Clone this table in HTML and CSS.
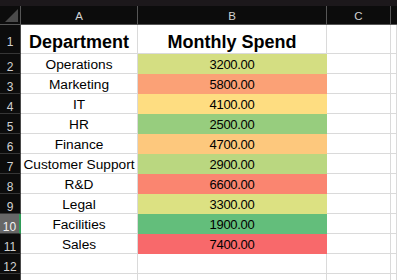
FILE: index.html
```html
<!DOCTYPE html>
<html>
<head>
<meta charset="utf-8">
<link rel="stylesheet" href="styles.css">
</head>
<body>
<div class="sheet">
  <div class="topband"></div>
  <div class="grid">
    <div class="hc corner"><svg width="20" height="18" viewBox="0 0 20 18"><polygon points="5,16 18,16 18,3" fill="#4a4a4a"/></svg></div>
    <div class="hc">A</div>
    <div class="hc">B</div>
    <div class="hc">C</div>
    <div class="hc last"></div>

    <div class="rh tall">1</div>
    <div class="c title">Department</div>
    <div class="c title">Monthly Spend</div>
    <div class="c"></div>
    <div class="c"></div>

    <div class="rh">2</div>
    <div class="c txt">Operations</div>
    <div class="c num" style="--f:#d4de82">3200.00</div>
    <div class="c"></div>
    <div class="c"></div>

    <div class="rh">3</div>
    <div class="c txt">Marketing</div>
    <div class="c num" style="--f:#fba176">5800.00</div>
    <div class="c"></div>
    <div class="c"></div>

    <div class="rh">4</div>
    <div class="c txt">IT</div>
    <div class="c num" style="--f:#fedd81">4100.00</div>
    <div class="c"></div>
    <div class="c"></div>

    <div class="rh">5</div>
    <div class="c txt">HR</div>
    <div class="c num" style="--f:#97cd7e">2500.00</div>
    <div class="c"></div>
    <div class="c"></div>

    <div class="rh">6</div>
    <div class="c txt">Finance</div>
    <div class="c num" style="--f:#fdc87d">4700.00</div>
    <div class="c"></div>
    <div class="c"></div>

    <div class="rh">7</div>
    <div class="c txt">Customer Support</div>
    <div class="c num" style="--f:#bad780">2900.00</div>
    <div class="c"></div>
    <div class="c"></div>

    <div class="rh">8</div>
    <div class="c txt">R&amp;D</div>
    <div class="c num" style="--f:#fa8570">6600.00</div>
    <div class="c"></div>
    <div class="c"></div>

    <div class="rh">9</div>
    <div class="c txt">Legal</div>
    <div class="c num" style="--f:#dce182">3300.00</div>
    <div class="c"></div>
    <div class="c"></div>

    <div class="rh sel">10</div>
    <div class="c txt">Facilities</div>
    <div class="c num" style="--f:#63be7b">1900.00</div>
    <div class="c"></div>
    <div class="c"></div>

    <div class="rh">11</div>
    <div class="c txt">Sales</div>
    <div class="c num" style="--f:#f8696b">7400.00</div>
    <div class="c"></div>
    <div class="c"></div>

    <div class="rh">12</div>
    <div class="c"></div>
    <div class="c"></div>
    <div class="c"></div>
    <div class="c"></div>

    <div class="rh"></div>
    <div class="c"></div>
    <div class="c"></div>
    <div class="c"></div>
    <div class="c"></div>
  </div>
</div>
</body>
</html>
```

FILE: styles.css
```css
html, body {
  margin: 0;
  padding: 0;
  background: #ffffff;
  overflow: hidden;
}

.sheet {
  width: 397px;
  height: 280px;
  overflow: hidden;
  font-family: "Liberation Sans", Arial, sans-serif;
}

.topband {
  height: 6px;
  background: #1c181b;
}

.grid {
  display: grid;
  grid-template-columns: 21px 117px 189px 64px 1fr;
  grid-template-rows: 19px 29px repeat(12, 20px);
}

.grid > div {
  box-sizing: border-box;
  border-right: 1px solid #dadada;
  border-bottom: 1px solid #dadada;
  min-width: 0;
}

.grid > .hc {
  background: #0c0c0c;
  border-right-color: #565656;
  border-bottom-color: #565656;
  color: #d2d2d2;
  font-size: 11.5px;
  display: flex;
  align-items: center;
  justify-content: center;
  padding-top: 1px;
}

.grid > .hc.last {
  border-right: none;
}

.grid > .corner {
  padding: 0;
  align-items: flex-start;
  justify-content: flex-start;
}

.corner svg {
  display: block;
}

.grid > .rh {
  background: #0c0c0c;
  border-right-color: #4a4a4a;
  border-bottom-color: #363636;
  color: #d2d2d2;
  font-size: 12px;
  display: flex;
  align-items: center;
  justify-content: center;
  padding-top: 6px;
}

.grid > .rh.sel {
  background: #676767;
  color: #f2f2f2;
  border-right: 2px solid #2f9a57;
}

.grid > .c {
  display: flex;
  align-items: flex-end;
  justify-content: center;
  color: #000000;
  white-space: nowrap;
  overflow: hidden;
}

.grid > .txt {
  font-size: 13.7px;
  line-height: 16px;
  padding-bottom: 0;
}

.grid > .num {
  font-size: 13px;
  letter-spacing: -0.3px;
  line-height: 16px;
  padding-bottom: 0;
  background: var(--f);
  border-color: var(--f);
}

.grid > .title {
  font-size: 18px;
  font-weight: bold;
  line-height: 22px;
  padding-bottom: 0;
}
```
